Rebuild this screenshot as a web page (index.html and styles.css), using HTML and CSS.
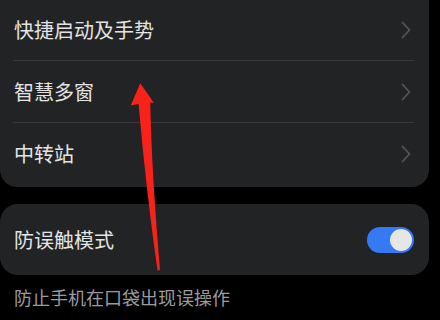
FILE: index.html
```
<!DOCTYPE html>
<html lang="zh-CN">
<head>
<meta charset="utf-8">
<link rel="stylesheet" href="styles.css">
</head>
<body>
<div class="page">
  <div class="card list">
    <div class="row first"><span class="label">快捷启动及手势</span><svg class="chev" viewBox="0 0 10 18" width="10" height="18"><path d="M1.5 1.5 L8.5 9 L1.5 16.5" fill="none" stroke="#55565a" stroke-width="1.8" stroke-linecap="round" stroke-linejoin="round"/></svg></div>
    <div class="row"><span class="label">智慧多窗</span><svg class="chev" viewBox="0 0 10 18" width="10" height="18"><path d="M1.5 1.5 L8.5 9 L1.5 16.5" fill="none" stroke="#55565a" stroke-width="1.8" stroke-linecap="round" stroke-linejoin="round"/></svg></div>
    <div class="row"><span class="label">中转站</span><svg class="chev" viewBox="0 0 10 18" width="10" height="18"><path d="M1.5 1.5 L8.5 9 L1.5 16.5" fill="none" stroke="#55565a" stroke-width="1.8" stroke-linecap="round" stroke-linejoin="round"/></svg></div>
  </div>
  <div class="card single">
    <span class="label">防误触模式</span>
    <div class="toggle"><div class="knob"></div></div>
  </div>
  <p class="caption">防止手机在口袋出现误操作</p>
</div>
<svg class="arrow" width="440" height="320" viewBox="0 0 440 320"><path d="M140.3 83.3 L154 103 L150.3 102.5 Q151.5 170 160 270 L157.5 270.5 Q146 190 138.6 104 L130.7 105.5 Z" fill="#f8221a"/></svg>
</body>
</html>
```
FILE: styles.css
```
html, body {
  margin: 0;
  padding: 0;
  background: #000;
}
body {
  width: 440px;
  height: 320px;
  overflow: hidden;
  position: relative;
  font-family: "Noto Sans CJK SC", "Noto Sans", sans-serif;
}
.page {
  display: flex;
  flex-direction: column;
}
.card {
  background: #222325;
  width: 429px;
}
.list {
  border-radius: 0 0 17px 17px;
  padding-bottom: 3px;
  display: flex;
  flex-direction: column;
}
.row {
  height: 61px;
  display: flex;
  align-items: center;
  justify-content: space-between;
  padding: 0 18px 0 14px;
  position: relative;
}
.row + .row::before {
  content: "";
  position: absolute;
  top: -1px;
  left: 13px;
  right: 15px;
  height: 1px;
  background: #37383a;
}
.row + .row {
  margin-top: 1px;
}
.row.first {
  height: 60px;
}
.label {
  font-size: 20px;
  color: #e4e4e4;
  line-height: 24px;
}
.chev {
  display: block;
}
.single {
  margin-top: 17px;
  height: 71px;
  border-radius: 18px;
  display: flex;
  align-items: center;
  justify-content: space-between;
  padding: 0 15px 0 14px;
  box-sizing: border-box;
}
.toggle {
  width: 47px;
  height: 26px;
  border-radius: 13px;
  background: #3579f4;
  display: flex;
  align-items: center;
  justify-content: flex-end;
  padding-right: 2px;
  box-sizing: border-box;
}
.knob {
  width: 22px;
  height: 22px;
  border-radius: 50%;
  background: #e6e6e6;
}
.caption {
  margin: 10px 0 0 14px;
  font-size: 18px;
  line-height: 24px;
  color: #9c9c9c;
}
.arrow {
  position: absolute;
  left: 0;
  top: 0;
  pointer-events: none;
}
```
